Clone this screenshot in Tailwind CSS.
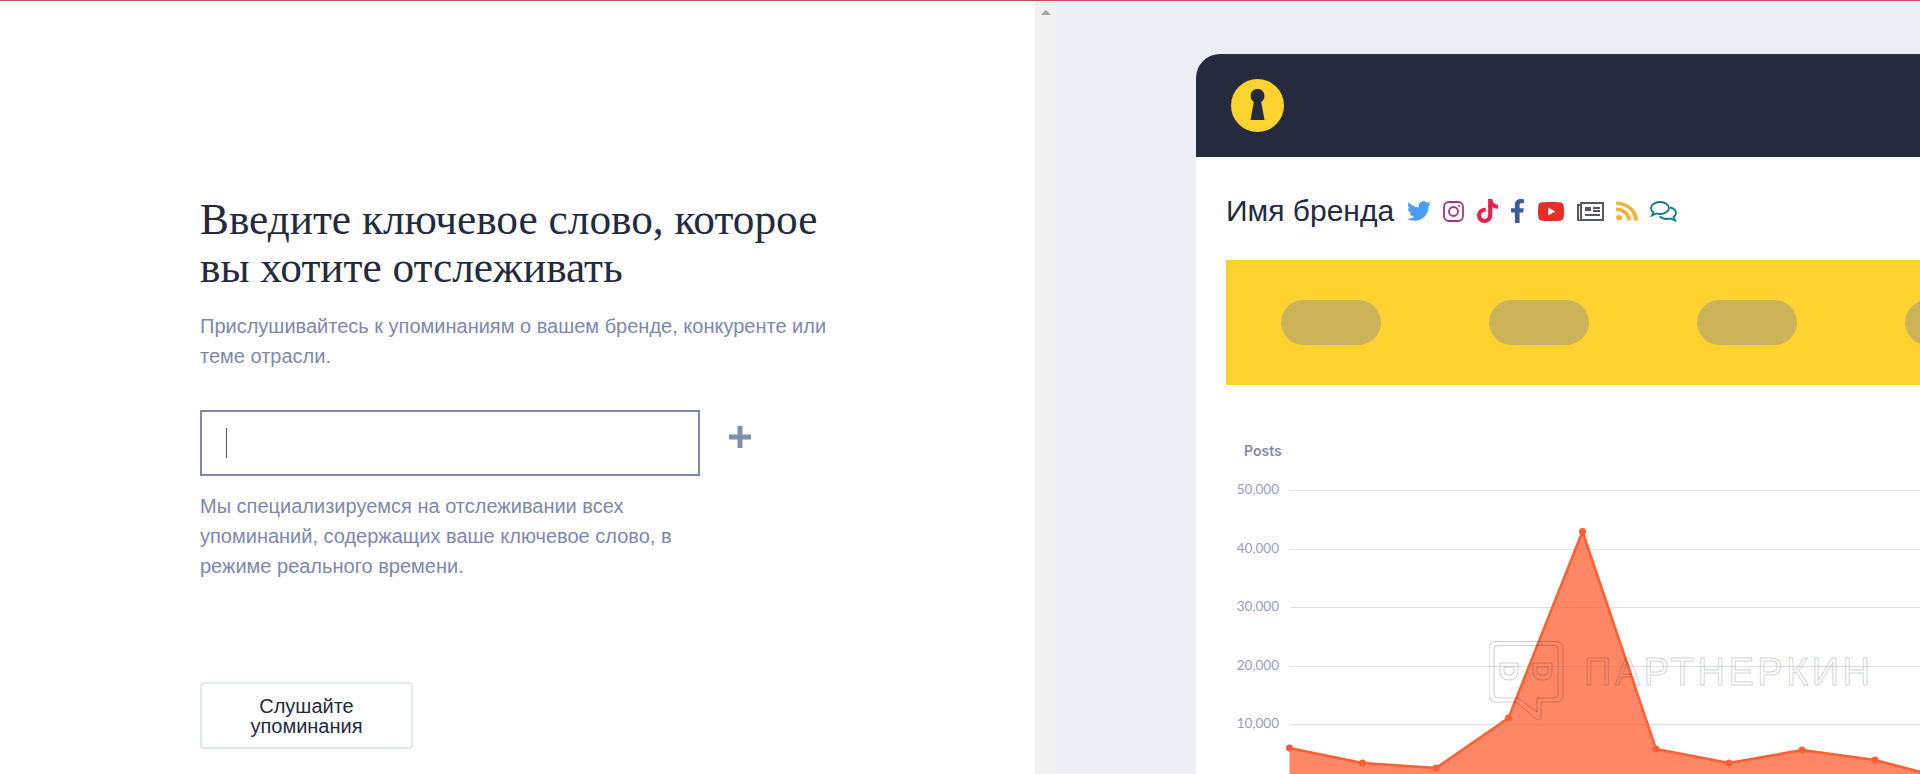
<!DOCTYPE html>
<html lang="ru">
<head>
<meta charset="utf-8">
<script src="https://cdn.jsdelivr.net/npm/@tailwindcss/browser@4"></script>
</head>
<body class="bg-white overflow-hidden">
<div class="relative flex h-[774px] w-[1920px] overflow-hidden border-t border-[#b9545c] font-['Liberation_Sans',sans-serif]">
  <!-- left -->
  <section class="w-[1035px] shrink-0 bg-white pl-[200px] pt-[194px]">
    <h1 class="w-[640px] font-['Liberation_Serif',serif] text-[43.3px] leading-[48px] text-[#252a3e]">Введите ключевое слово, которое вы хотите отслеживать</h1>
    <p class="mt-[20px] w-[640px] text-[20px] leading-[30px] text-[#8087ab]">Прислушивайтесь к упоминаниям о вашем бренде, конкуренте или теме отрасли.</p>
    <div class="mt-[39px] flex items-center">
      <div class="flex h-[66px] w-[500px] items-center border-2 border-[#7f87ab] pl-[24px]">
        <div class="h-[30px] w-px bg-[#555a70]"></div>
      </div>
      <svg class="ml-[29px] mb-[13px] h-[22px] w-[22px]" viewBox="0 0 22 22"><path d="M11 0v22M0 11h22" stroke="#7d92ac" stroke-width="5"/></svg>
    </div>
    <p class="mt-[15px] w-[500px] text-[20px] leading-[30px] text-[#8087ab]">Мы специализируемся на отслеживании всех упоминаний, содержащих ваше ключевое слово, в режиме реального времени.</p>
    <button class="mt-[101px] h-[67px] w-[213px] rounded-[4px] border-2 border-[#e2e8ec] bg-white px-[30px] text-[20px] leading-[20px] text-[#252a3e]">Слушайте упоминания</button>
  </section>
  <!-- scrollbar -->
  <div class="flex w-[21px] shrink-0 justify-center bg-[#f0f0f0] pt-[9px]">
    <div class="h-0 w-0 border-x-[5px] border-b-[5px] border-x-transparent border-b-[#a3a3a3]"></div>
  </div>
  <!-- right -->
  <section class="flex-1 bg-[#ecedf5] pl-[140px] pt-[53px]">
    <div class="h-[800px] w-[800px] rounded-tl-[24px] bg-white">
      <div class="flex h-[103px] items-center rounded-tl-[24px] bg-[#252a3e] pl-[35px]">
        <svg class="h-[53px] w-[53px]" viewBox="0 0 53 53"><circle cx="26.5" cy="26.5" r="26.5" fill="#fed330"/><path d="M26.500 10a7 7 0 0 1 3.700 12.900L33.500 41h-14l3.300-18.100a7 7 0 0 1 3.700-12.900z" fill="#252a3e"/></svg>
      </div>
      <div class="pl-[30px]">
        <div class="mt-[35px] flex h-[38px] items-center text-[#252a3e]">
          <span class="text-[30px] leading-[38px]">Имя бренда</span>
          <svg class="ml-[13px] h-[24px] w-[24px]" viewBox="0 0 512 512"><path fill="#4b9df8" d="M459.37 151.716c.325 4.548.325 9.097.325 13.645 0 138.72-105.583 298.558-298.558 298.558-59.452 0-114.68-17.219-161.137-47.106 8.447.974 16.568 1.299 25.34 1.299 49.055 0 94.213-16.568 130.274-44.832-46.132-.975-84.792-31.188-98.112-72.772 6.498.974 12.995 1.624 19.818 1.624 9.421 0 18.843-1.3 27.614-3.573-48.081-9.747-84.143-51.98-84.143-102.985v-1.299c13.969 7.797 30.214 12.67 47.431 13.319-28.264-18.843-46.781-51.005-46.781-87.391 0-19.492 5.197-37.36 14.294-52.954 51.655 63.675 129.3 105.258 216.365 109.807-1.624-7.797-2.599-15.918-2.599-24.04 0-57.828 46.782-104.934 104.934-104.934 30.213 0 57.502 12.67 76.67 33.137 23.715-4.548 46.456-13.32 66.599-25.34-7.798 24.366-24.366 44.833-46.132 57.827 21.117-2.273 41.584-8.122 60.426-16.243-14.292 20.791-32.161 39.308-52.628 54.253z"/></svg>
          <svg class="ml-[12px] h-[21px] w-[21px]" viewBox="0 0 21 21" fill="none" stroke="#a8327f" stroke-width="1.800"><rect x="1" y="1" width="19" height="19" rx="5"/><circle cx="10.500" cy="10.500" r="4.500"/><circle cx="16" cy="5" r="1" fill="#a8327f" stroke="none"/></svg>
          <svg class="ml-[13px] h-[24px] w-[21px]" viewBox="0 0 448 512"><path fill="#e8204f" d="M448,209.91a210.06,210.06,0,0,1-122.77-39.25V349.38A162.55,162.55,0,1,1,185,188.31V278.2a74.62,74.62,0,1,0,52.23,71.18V0l88,0a121.18,121.18,0,0,0,1.86,22.17h0A122.18,122.18,0,0,0,381,102.39a121.43,121.43,0,0,0,67,20.14Z"/></svg>
          <svg class="ml-[12px] h-[24px] w-[15px]" viewBox="0 0 320 512"><path fill="#3b5a9a" d="M279.14 288l14.22-92.66h-88.91v-60.13c0-25.35 12.42-50.06 52.24-50.06h40.42V6.26S260.43 0 225.36 0c-73.22 0-121.08 44.38-121.08 124.72v70.62H22.89V288h81.39v224h100.17V288z"/></svg>
          <svg class="ml-[13px] h-[19px] w-[26px]" viewBox="15 64 546 384" preserveAspectRatio="none"><path fill="#e52d27" d="M549.655 124.083c-6.281-23.65-24.787-42.276-48.284-48.597C458.781 64 288 64 288 64S117.22 64 74.629 75.486c-23.497 6.322-42.003 24.947-48.284 48.597-11.412 42.867-11.412 132.305-11.412 132.305s0 89.438 11.412 132.305c6.281 23.65 24.787 41.5 48.284 47.821C117.22 448 288 448 288 448s170.78 0 213.371-11.486c23.497-6.321 42.003-24.171 48.284-47.821 11.412-42.867 11.412-132.305 11.412-132.305s0-89.438-11.412-132.305z"/><path fill="#fff" d="M232.145 337.591V175.185l142.739 81.205-142.739 81.201z"/></svg>
          <svg class="ml-[13px] h-[19px] w-[27px]" viewBox="0 0 27 19"><rect x="4" y="1" width="22" height="17" fill="none" stroke="#55585f" stroke-width="2"/><path d="M4 3H1v14a1.500 1.500 0 0 0 3 0" fill="none" stroke="#55585f" stroke-width="2"/><rect x="8" y="5" width="6" height="4" fill="#55585f"/><path d="M16 6h7M16 9h7M8 13h15" stroke="#55585f" stroke-width="2"/></svg>
          <svg class="ml-[12px] h-[22px] w-[22px]" viewBox="0 0 448 512" preserveAspectRatio="none"><path fill="#fbb03b" d="M128.081 415.959c0 35.369-28.672 64.041-64.041 64.041S0 451.328 0 415.959s28.672-64.041 64.041-64.041 64.04 28.673 64.04 64.041zm175.66 47.25c-8.354-154.6-132.185-278.587-286.95-286.95C7.656 175.765 0 183.105 0 192.253v48.069c0 8.415 6.49 15.472 14.887 16.018 111.832 7.284 201.473 96.702 208.772 208.772.547 8.397 7.604 14.887 16.018 14.887h48.069c9.149.001 16.489-7.655 15.995-16.79zm144.249.288C439.596 229.677 251.465 40.445 16.503 32.01 7.473 31.686 0 38.981 0 48.016v48.068c0 8.625 6.835 15.645 15.453 15.999 191.179 7.839 344.627 161.316 352.465 352.465.353 8.618 7.373 15.453 15.999 15.453h48.068c9.034-.001 16.329-7.474 16.005-16.504z"/></svg>
          <svg class="ml-[12px] h-[21px] w-[27px]" viewBox="0 0 27 21" fill="none" stroke="#12787a" stroke-width="1.800"><path d="M10 1C5.200 1 1 3.600 1 7c0 1.800 1 3.200 2.500 4.300L2 14.500l4.500-2c1.100.3 2.300.5 3.500.5 4.800 0 9-2.600 9-6s-4.200-6-9-6z"/><path d="M20 6.500c3.400.8 6 2.900 6 5.500 0 1.700-1 3-2.500 4l1.500 3.500-4.500-2c-1.100.3-2.300.5-3.500.5-3 0-5.700-1-7.300-2.700"/></svg>
        </div>
        <div class="mt-[30px] flex h-[125px] items-center gap-[108px] bg-[#fed330] pl-[55px]">
          <div class="h-[45px] w-[100px] shrink-0 rounded-full bg-[#ccb358]"></div>
          <div class="h-[45px] w-[100px] shrink-0 rounded-full bg-[#ccb358]"></div>
          <div class="h-[45px] w-[100px] shrink-0 rounded-full bg-[#ccb358]"></div>
          <div class="h-[45px] w-[100px] shrink-0 rounded-full bg-[#ccb358]"></div>
        </div>
        <svg class="mt-[40px] block font-['Inter',sans-serif]" width="770" height="360" viewBox="1226 425 770 360">
          <text x="1244" y="456" font-size="14" font-weight="600" fill="#8489ab">Posts</text>
          <g font-family="Lato" font-size="13.500" fill="#9a9ebc" text-anchor="end">
            <text x="1279" y="494">50,000</text>
            <text x="1279" y="553">40,000</text>
            <text x="1279" y="611">30,000</text>
            <text x="1279" y="670">20,000</text>
            <text x="1279" y="728">10,000</text>
          </g>
          <g stroke="#dfe0e9" stroke-width="1">
            <path d="M1290 490.500H1996M1290 549.500H1996M1290 607.500H1996M1290 666.500H1996M1290 724.500H1996"/>
          </g>
          <path d="M1289.500 748L1362.500 763L1436 768L1508.500 718L1582.500 531.500L1656 749L1729 763L1802 750L1875 760L1948 779V800H1289.500Z" fill="#ff5f33" fill-opacity="0.75" stroke="none"/>
          <path d="M1289.500 748L1362.500 763L1436 768L1508.500 718L1582.500 531.500L1656 749L1729 763L1802 750L1875 760L1948 779" fill="none" stroke="#ff5f33" stroke-width="2.500"/>
          <g fill="#ff5f33">
            <circle cx="1289.500" cy="748" r="3.500"/><circle cx="1362.500" cy="763" r="3.500"/><circle cx="1436" cy="768" r="3.500"/><circle cx="1508.500" cy="718" r="3.500"/><circle cx="1582.500" cy="531.500" r="3.500"/><circle cx="1656" cy="749" r="3.500"/><circle cx="1729" cy="763" r="3.500"/><circle cx="1802" cy="750" r="3.500"/><circle cx="1875" cy="760" r="3.500"/>
          </g>
        </svg>
      </div>
    </div>
  </section>
  <!-- watermark -->
  <div class="absolute left-[1489px] top-[640px] flex items-start">
    <svg class="h-[80px] w-[76px]" viewBox="0 0 76 80" fill="none" stroke="#000" stroke-opacity="0.2" stroke-width="1">
      <path d="M6 .5H68a6 6 0 0 1 6 6V55a6 6 0 0 1-6 6H52v15a3 3 0 0 1-5 2L27 61H6a6 6 0 0 1-6-6V6.500a6 6 0 0 1 6-6z"/>
      <path d="M9 4.500H65a4 4 0 0 1 4 4V53a4 4 0 0 1-4 4H48v14L29 57H9a4 4 0 0 1-4-4V8.500a4 4 0 0 1 4-4z"/>
      <path d="M11 22H29V31a8 8 0 0 1-8 8h-2a8 8 0 0 1-8-8zM15 26H25V30a4 4 0 0 1-4 4h-2a4 4 0 0 1-4-4z"/>
      <path d="M44 22H63V31a8 8 0 0 1-8 8h-3a8 8 0 0 1-8-8zM48 26H59V30a4 4 0 0 1-4 4h-3a4 4 0 0 1-4-4z"/>
    </svg>
    <span class="ml-[19px] mt-[11px] text-[38px] leading-[40px] tracking-[3.500px] text-transparent [-webkit-text-stroke:1px_rgba(0,0,0,0.2)]">ПАРТНЕРКИН</span>
  </div>
</div>
</body>
</html>
